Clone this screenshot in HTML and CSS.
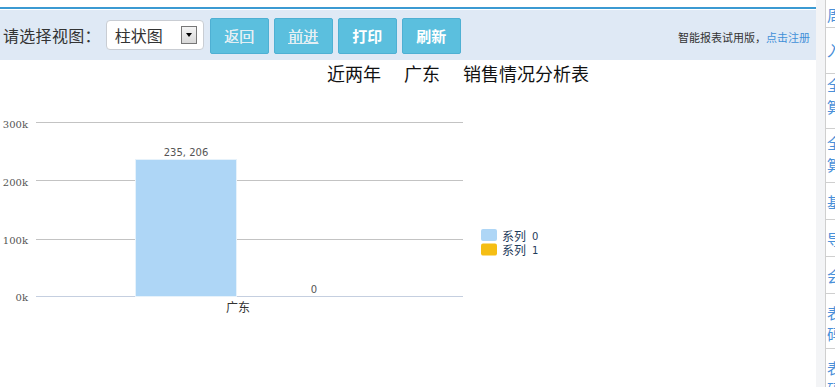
FILE: index.html
```html
<!DOCTYPE html>
<html lang="zh">
<head>
<meta charset="utf-8">
<title>销售情况分析表</title>
<link rel="stylesheet" href="styles.css">
</head>
<body>
<div class="page">
  <main class="main">
    <div class="toolbar">
      <span class="tb-label">请选择视图：</span>
      <div class="select">
        <span class="select-text">柱状图</span>
        <span class="select-arrow"><span class="tri"></span></span>
      </div>
      <button class="btn disabled">返回</button>
      <button class="btn disabled under">前进</button>
      <button class="btn">打印</button>
      <button class="btn">刷新</button>
      <span class="trial">智能报表试用版，<a class="reg">点击注册</a></span>
    </div>
    <div class="chart">
      <svg class="chart-svg" width="816" height="326" viewBox="0 61 816 326" xmlns="http://www.w3.org/2000/svg">
        <text class="title" x="327" y="82">近两年</text>
        <text class="title" x="404" y="82">广东</text>
        <text class="title" x="463" y="82">销售情况分析表</text>

        <line class="grid" x1="36" y1="123.5" x2="463" y2="123.5"/>
        <line class="grid" x1="36" y1="181.5" x2="463" y2="181.5"/>
        <line class="grid" x1="36" y1="240.5" x2="463" y2="240.5"/>
        <line class="axis" x1="36" y1="297.5" x2="463" y2="297.5"/>

        <text class="ylab" x="28" y="129">300k</text>
        <text class="ylab" x="28" y="187">200k</text>
        <text class="ylab" x="28" y="245">100k</text>
        <text class="ylab" x="28" y="302">0k</text>

        <rect class="bar0" x="135.5" y="160.5" width="101" height="137"/>
        <text class="vlab" x="186" y="157">235, 206</text>
        <text class="vlab" x="314" y="294">0</text>
        <text class="xlab" x="238" y="313">广东</text>

        <rect class="leg0" x="481" y="230" width="16" height="12" rx="2"/>
        <rect class="leg1" x="481" y="244.5" width="16" height="12" rx="2"/>
        <text class="legt" x="502" y="241.5">系列</text>
        <text class="legn" x="532" y="241">0</text>
        <text class="legt" x="502" y="255.5">系列</text>
        <text class="legn" x="532" y="255">1</text>
      </svg>
    </div>
  </main>
  <div class="gutter"></div>
  <nav class="side">
    <div class="side-item s1">周期报表</div>
    <div class="side-item s2">入门示例</div>
    <div class="side-item s3">全年销售预<br>算分析</div>
    <div class="side-item s4">全年销售决<br>算汇总</div>
    <div class="side-item s5">基础报表</div>
    <div class="side-item s5">导出报表</div>
    <div class="side-item s5">会计报表</div>
    <div class="side-item s6">表格编<br>码规则</div>
    <div class="side-item s6">表单编<br>码示例</div>
  </nav>
</div>
</body>
</html>
```
FILE: styles.css
```css
html, body {
  margin: 0;
  padding: 0;
  background: #fff;
}
body {
  width: 835px;
  height: 387px;
  overflow: hidden;
  font-family: "Noto Sans CJK SC", "DejaVu Sans", sans-serif;
}
.page {
  display: flex;
  width: 835px;
  height: 387px;
}
.main {
  width: 816px;
  flex: none;
  padding-top: 7px;
}
.toolbar {
  height: 50px;
  border-top: 2px solid #3b9ad2;
  box-shadow: inset 0 1px 0 #fff;
  padding-top: 1px;
  background: #dfe9f5;
  display: flex;
  align-items: center;
  padding-left: 3px;
  padding-right: 6px;
  box-sizing: content-box;
}
.tb-label {
  font-size: 16px;
  color: #333;
  letter-spacing: 0.3px;
  margin-right: 5px;
}
.select {
  width: 96px;
  height: 28px;
  border: 1px solid #c9cdd3;
  border-radius: 4px;
  background: #fff;
  display: flex;
  align-items: center;
  margin-right: 6px;
}
.select-text {
  font-size: 16px;
  color: #333;
  margin-left: 8px;
  flex: 1;
}
.select-arrow {
  width: 14px;
  height: 16px;
  border: 1px solid #777;
  background: linear-gradient(#f4f4f4, #d8d8d8);
  margin-right: 6px;
  display: flex;
  align-items: center;
  justify-content: center;
}
.tri {
  width: 0;
  height: 0;
  border-left: 3px solid transparent;
  border-right: 3px solid transparent;
  border-top: 4px solid #000;
}
.btn {
  width: 59px;
  height: 36px;
  margin-right: 5px;
  border: 1px solid #4eb0d3;
  border-radius: 2px;
  background: #5bbfde;
  color: #fff;
  font-family: "Noto Sans CJK SC", sans-serif;
  font-size: 15px;
  font-weight: bold;
  padding: 0;
  margin-top: 1px;
}
.btn.disabled {
  color: #e3eef3;
  font-weight: normal;
  text-shadow: 0 0 0.6px #fff;
}
.btn.under {
  text-decoration: underline;
}
.trial {
  margin-left: auto;
  font-size: 11px;
  color: #333;
  margin-top: 3px;
}
.reg {
  color: #3f8fd8;
}
.chart {
  height: 326px;
}
.chart-svg {
  display: block;
}
.title {
  font-size: 18px;
  fill: #111;
}
.grid {
  stroke: #c3c3c3;
  stroke-width: 1;
}
.axis {
  stroke: #c5cfe0;
  stroke-width: 1;
}
.ylab {
  font-family: "DejaVu Serif", serif;
  font-size: 10px;
  fill: #555;
  text-anchor: end;
}
.bar0 {
  fill: #aed6f6;
  stroke: #e6f2fb;
  stroke-width: 1;
}
.vlab {
  font-family: "DejaVu Sans", sans-serif;
  font-size: 10px;
  fill: #555;
  text-anchor: middle;
}
.xlab {
  font-size: 12px;
  fill: #333;
  text-anchor: middle;
}
.leg0 { fill: #aed6f6; }
.leg1 { fill: #f5be14; }
.legt {
  font-size: 12px;
  fill: #1f3b5b;
}
.legn {
  font-family: "DejaVu Sans", sans-serif;
  font-size: 10px;
  fill: #1f3b5b;
}
.gutter {
  width: 9px;
  flex: none;
  background: #f3f4f6;
}
.side {
  flex: none;
  width: 150px;
  border-left: 1px solid #cfcfcf;
  background: #fff;
  overflow: hidden;
}
.side-item {
  box-sizing: border-box;
  border-bottom: 1px solid #cfcfcf;
  color: #4a90d9;
  font-size: 15px;
  line-height: 22px;
  padding-left: 1px;
  white-space: nowrap;
}
.s1 { height: 28px; padding-top: 4px; }
.s2 { height: 46px; padding-top: 11px; }
.s3 { height: 55px; padding-top: 0; }
.s4 { height: 54px; padding-top: 3px; }
.s5 { height: 37px; padding-top: 8px; }
.s6 { height: 55px; padding-top: 8px; line-height: 21px; }
```
